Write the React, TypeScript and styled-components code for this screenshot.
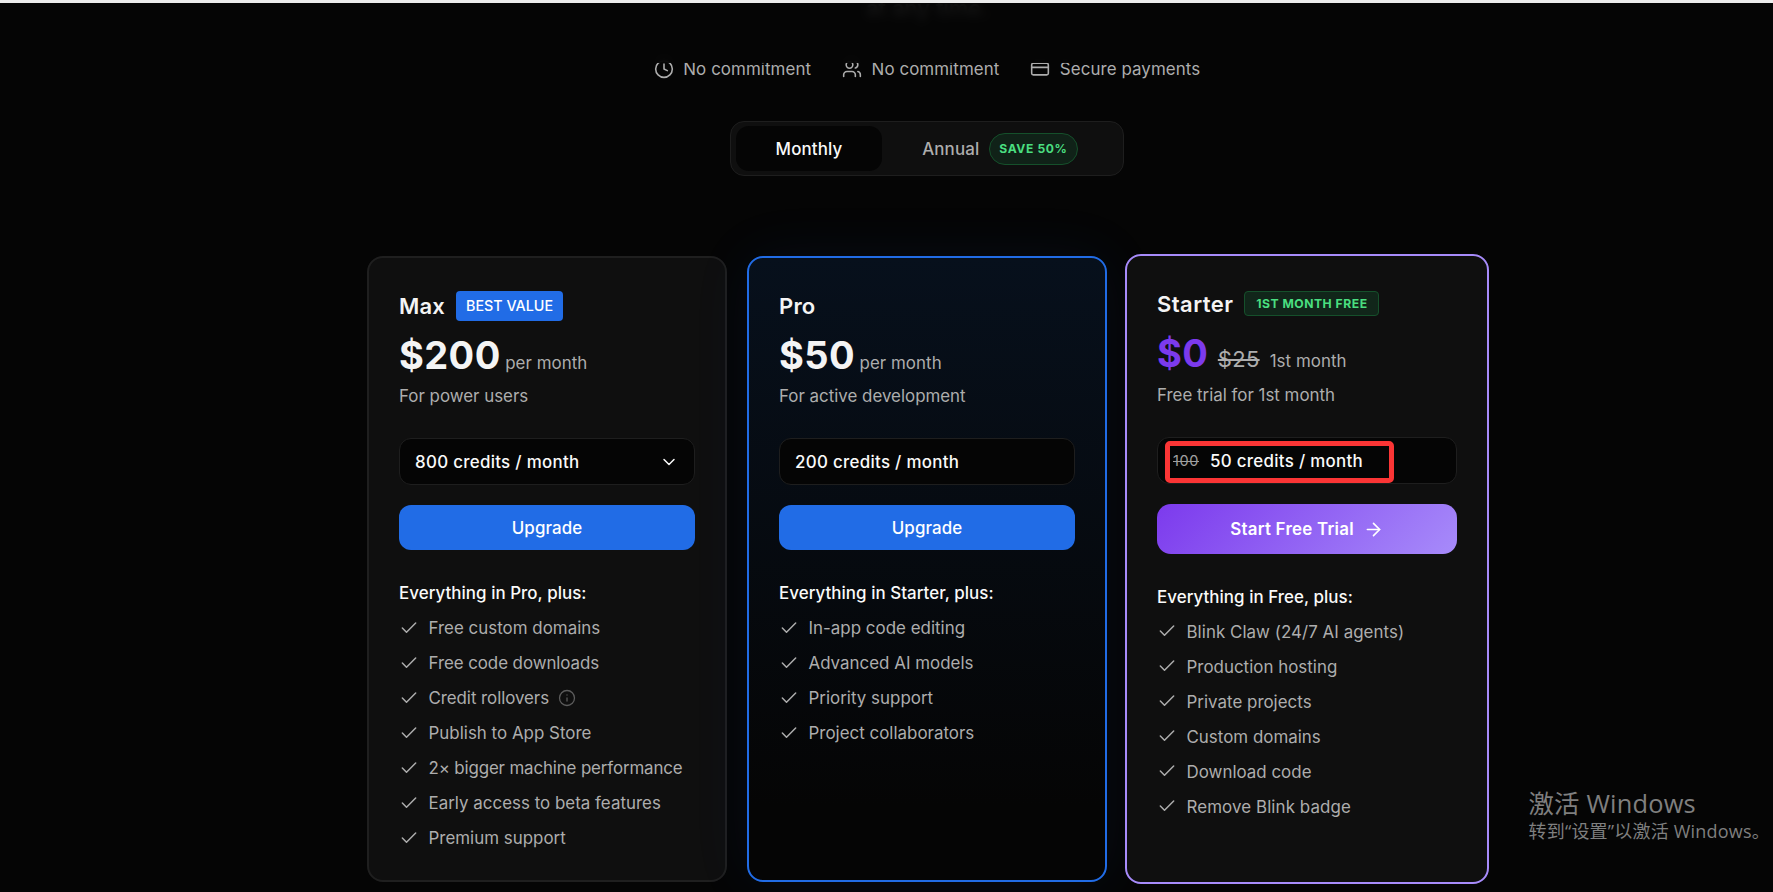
import React from 'react';
import styled, { createGlobalStyle, css } from 'styled-components';
import { ArrowRight, Check, ChevronDown, Clock, CreditCard, Info, Users } from 'lucide-react';

const Global = createGlobalStyle`
  * { box-sizing: border-box; }
  body {
    margin: 0;
    background: #050505;
    color: #f4f4f4;
    font-family: Inter, "Noto Sans CJK SC", sans-serif;
    font-size: 16.9px;
    line-height: 24px;
    overflow: hidden;
  }
`;

type Variant = 'plain' | 'blue' | 'violet';
interface Tracked { $ls?: number }

const tracking = css<Tracked>`letter-spacing: ${p => p.$ls ?? 0.02}px;`;

const Page = styled.main`
  position: relative;
  height: 892px;
  overflow: hidden;
  padding-left: 81px;
  border-top: 3px solid #ededed;
  display: flex;
  flex-direction: column;
  align-items: center;
`;

const StickyHeader = styled.header`
  position: absolute;
  inset: 0 0 auto 0;
  height: 60px;
  z-index: 2;
  background: rgba(5, 5, 5, 0.9);
  backdrop-filter: blur(4px);
`;

const HeroLine = styled.p`
  margin: 0;
  height: 54px;
  font-size: 22px;
  font-weight: 500;
  line-height: 11px;
  color: #a6a6a6;
`;

const Assurances = styled.ul`
  list-style: none;
  margin: 0;
  padding: 0;
  display: flex;
  gap: 31px;
  color: #adadad;
`;

const Assurance = styled.li<Tracked>`
  display: flex;
  align-items: center;
  gap: 9.5px;
  ${tracking}
`;

const Toggle = styled.div`
  display: flex;
  width: 394px;
  height: 55px;
  margin-top: 40px;
  padding: 4px 5px;
  background: #0f0f0f;
  border: 1px solid #1e1e1e;
  border-radius: 14px;
`;

const ToggleOption = styled.button<{ $active?: boolean }>`
  display: flex;
  align-items: center;
  justify-content: center;
  gap: 9.5px;
  flex: ${p => (p.$active ? '0 0 146px' : '1')};
  border: 0;
  padding: 0;
  border-radius: 13px;
  font: inherit;
  font-weight: 500;
  letter-spacing: 0.15px;
  color: ${p => (p.$active ? '#fafafa' : '#adadad')};
  background: ${p => (p.$active ? '#050505' : 'transparent')};
`;

const SavePill = styled.span`
  display: flex;
  align-items: center;
  justify-content: center;
  width: 89px;
  height: 32px;
  border-radius: 16px;
  border: 1px solid #15502b;
  background: #102218;
  color: #4ade80;
  font-size: 12.1px;
  font-weight: 700;
  letter-spacing: 0.6px;
`;

const Plans = styled.section`
  display: flex;
  align-items: center;
  gap: 18px;
  margin: 78px 0 0 2px;
`;

const cardLook = {
  plain: css`width: 360px; height: 626px; margin-right: 2px; background: #0f0f0f; border-color: #1f1f1f;`,
  blue: css`
    width: 360px;
    height: 626px;
    background: linear-gradient(180deg, #07101c 0%, #050505 88%) padding-box;
    border-color: #216ce6;
    box-shadow: 0 0 60px rgba(33, 108, 230, 0.08);
  `,
  violet: css`
    position: relative;
    width: 364px;
    height: 630px;
    background: #0f0f0f;
    border-color: #a78bfa;
    li > svg { margin-top: -2px; }
  `,
};

const Card = styled.article<{ $variant: Variant }>`
  flex: none;
  padding: 33px 30px 0;
  border: 2px solid;
  border-radius: 16px;
  ${p => cardLook[p.$variant]}
`;

const TitleRow = styled.header`
  display: flex;
  align-items: center;
  gap: 11px;
  height: 30px;
`;

const PlanName = styled.h2<Tracked>`
  margin: 0;
  font-size: 22px;
  font-weight: 600;
  ${tracking}
`;

const Badge = styled.span<{ $green?: boolean }>`
  display: flex;
  align-items: center;
  justify-content: center;
  border-radius: 4px;
  white-space: nowrap;
  ${p => p.$green
    ? css`
        width: 135px;
        height: 25px;
        margin-top: -1px;
        border: 1px solid #15502b;
        background: #11261a;
        color: #4ade80;
        font-size: 12.2px;
        font-weight: 700;
        letter-spacing: 0.5px;
      `
    : css`
        width: 107px;
        height: 30px;
        background: #216ce6;
        color: #fff;
        font-size: 14.3px;
        font-weight: 500;
      `}
`;

const PriceRow = styled.div`
  display: flex;
  align-items: baseline;
  height: 45px;
  margin-top: 12px;
  line-height: 44px;
  color: #adadad;
`;

const Price = styled.strong<{ $violet?: boolean }>`
  font-size: 38px;
  font-weight: 700;
  letter-spacing: 0.4px;
  color: ${p => (p.$violet ? '#7c3aed' : '#f4f4f4')};
`;

const OldPrice = styled.s`
  margin-left: 9.5px;
  font-size: 22px;
  letter-spacing: 0.3px;
`;

const Period = styled.span<{ $gap: number }>`
  margin-left: ${p => p.$gap}px;
  letter-spacing: 0.05px;
`;

const Description = styled.p<{ $top: number }>`
  margin: ${p => p.$top}px 0 0;
  color: #adadad;
  letter-spacing: 0;
`;

const CreditBox = styled.div<Tracked>`
  position: relative;
  display: flex;
  align-items: center;
  height: 47px;
  margin-top: 30px;
  padding: 0 15px;
  background: #050505;
  border: 1px solid #1e1e1e;
  border-radius: 12px;
  font-weight: 500;
  white-space: nowrap;
  color: #fafafa;
  ${tracking}
  svg { margin-left: auto; }
`;

const OldCredits = styled.s`
  width: 37px;
  font-size: 14.5px;
  font-weight: 400;
  color: #a0a0a0;
  letter-spacing: 0.6px;
`;

const Highlight = styled.span`
  position: absolute;
  left: 7px;
  top: 3px;
  width: 229px;
  height: 42px;
  border: 5px solid #fb3535;
  border-radius: 5px;
`;

const Action = styled.button<{ $violet?: boolean }>`
  display: flex;
  align-items: center;
  justify-content: center;
  gap: 9px;
  width: 100%;
  height: ${p => (p.$violet ? 50 : 45)}px;
  margin-top: 20px;
  border: 0;
  border-radius: ${p => (p.$violet ? 14 : 12)}px;
  background: ${p => (p.$violet ? 'linear-gradient(135deg, #7c3aed, #a78bfa)' : '#216ce6')};
  color: #fff;
  font: inherit;
  font-weight: ${p => (p.$violet ? 600 : 500)};
  letter-spacing: ${p => (p.$violet ? 0.25 : 0.1)}px;
`;

const FeatureHeading = styled.h3`
  margin: 31px 0 11px;
  font-size: 16.9px;
  font-weight: 500;
  color: #fafafa;
  letter-spacing: 0.05px;
`;

const FeatureList = styled.ul`
  list-style: none;
  margin: 0;
  padding: 0;
  display: grid;
  gap: 11px;
`;

const Feature = styled.li<Tracked>`
  display: flex;
  align-items: center;
  gap: 9.5px;
  height: 24px;
  white-space: nowrap;
  color: #adadad;
  ${tracking}
`;

const Watermark = styled.aside`
  position: absolute;
  left: 1528.5px;
  top: 783px;
  z-index: 3;
  color: #7f7f7f;
  font-family: "Open Sans", "Noto Sans CJK SC", sans-serif;
  white-space: nowrap;
`;

const WatermarkTitle = styled.div`
  font-size: 25.4px;
  line-height: 34px;
  letter-spacing: 0.2px;
`;

const WatermarkText = styled.div`
  font-size: 18px;
  line-height: 22px;
  letter-spacing: 0.2px;
`;

interface Item { text: string; ls?: number; info?: boolean }

const Features = ({ title, items }: { title: string; items: Item[] }) => (
  <>
    <FeatureHeading>{title}</FeatureHeading>
    <FeatureList>
      {items.map(i => (
        <Feature key={i.text} $ls={i.ls}>
          <Check size={20} strokeWidth={1.8} />
          {i.text}
          {i.info && <Info size={18} strokeWidth={1.7} color="#5c5c5c" />}
        </Feature>
      ))}
    </FeatureList>
  </>
);

export default function App() {
  return (
    <>
      <Global />
      <Page>
        <StickyHeader />
        <HeroLine>at any time.</HeroLine>
        <Assurances>
          <Assurance $ls={0.08}><Clock size={20} strokeWidth={1.9} />No commitment</Assurance>
          <Assurance $ls={0.08}><Users size={20} strokeWidth={1.9} />No commitment</Assurance>
          <Assurance $ls={0.08}><CreditCard size={20} strokeWidth={1.9} />Secure payments</Assurance>
        </Assurances>
        <Toggle>
          <ToggleOption $active>Monthly</ToggleOption>
          <ToggleOption>Annual<SavePill>SAVE 50%</SavePill></ToggleOption>
        </Toggle>
        <Plans>
          <Card $variant="plain">
            <TitleRow><PlanName $ls={0.2}>Max</PlanName><Badge>BEST VALUE</Badge></TitleRow>
            <PriceRow><Price>$200</Price><Period $gap={4.5}>per month</Period></PriceRow>
            <Description $top={6}>For power users</Description>
            <CreditBox $ls={0.3}>800 credits / month<ChevronDown size={20} strokeWidth={1.8} /></CreditBox>
            <Action>Upgrade</Action>
            <Features
              title="Everything in Pro, plus:"
              items={[
                { text: 'Free custom domains' },
                { text: 'Free code downloads', ls: -0.06 },
                { text: 'Credit rollovers', ls: -0.06, info: true },
                { text: 'Publish to App Store' },
                { text: '2× bigger machine performance', ls: -0.14 },
                { text: 'Early access to beta features' },
                { text: 'Premium support' },
              ]}
            />
          </Card>
          <Card $variant="blue">
            <TitleRow><PlanName $ls={0.2}>Pro</PlanName></TitleRow>
            <PriceRow><Price>$50</Price><Period $gap={4.5}>per month</Period></PriceRow>
            <Description $top={6}>For active development</Description>
            <CreditBox $ls={0.3}>200 credits / month</CreditBox>
            <Action>Upgrade</Action>
            <Features
              title="Everything in Starter, plus:"
              items={[
                { text: 'In-app code editing' },
                { text: 'Advanced AI models' },
                { text: 'Priority support' },
                { text: 'Project collaborators' },
              ]}
            />
          </Card>
          <Card $variant="violet">
            <TitleRow><PlanName $ls={0.45}>Starter</PlanName><Badge $green>1ST MONTH FREE</Badge></TitleRow>
            <PriceRow>
              <Price $violet>$0</Price><OldPrice>$25</OldPrice><Period $gap={10}>1st month</Period>
            </PriceRow>
            <Description $top={7}>Free trial for 1st month</Description>
            <CreditBox $ls={0.3}>
              <OldCredits>100</OldCredits>50 credits / month
              <Highlight />
            </CreditBox>
            <Action $violet>Start Free Trial<ArrowRight size={21} strokeWidth={1.9} /></Action>
            <Features
              title="Everything in Free, plus:"
              items={[
                { text: 'Blink Claw (24/7 AI agents)', ls: 0.05 },
                { text: 'Production hosting' },
                { text: 'Private projects' },
                { text: 'Custom domains' },
                { text: 'Download code' },
                { text: 'Remove Blink badge', ls: 0.1 },
              ]}
            />
          </Card>
        </Plans>
        <Watermark>
          <WatermarkTitle>激活 Windows</WatermarkTitle>
          <WatermarkText>转到“设置”以激活 Windows。</WatermarkText>
        </Watermark>
      </Page>
    </>
  );
}
